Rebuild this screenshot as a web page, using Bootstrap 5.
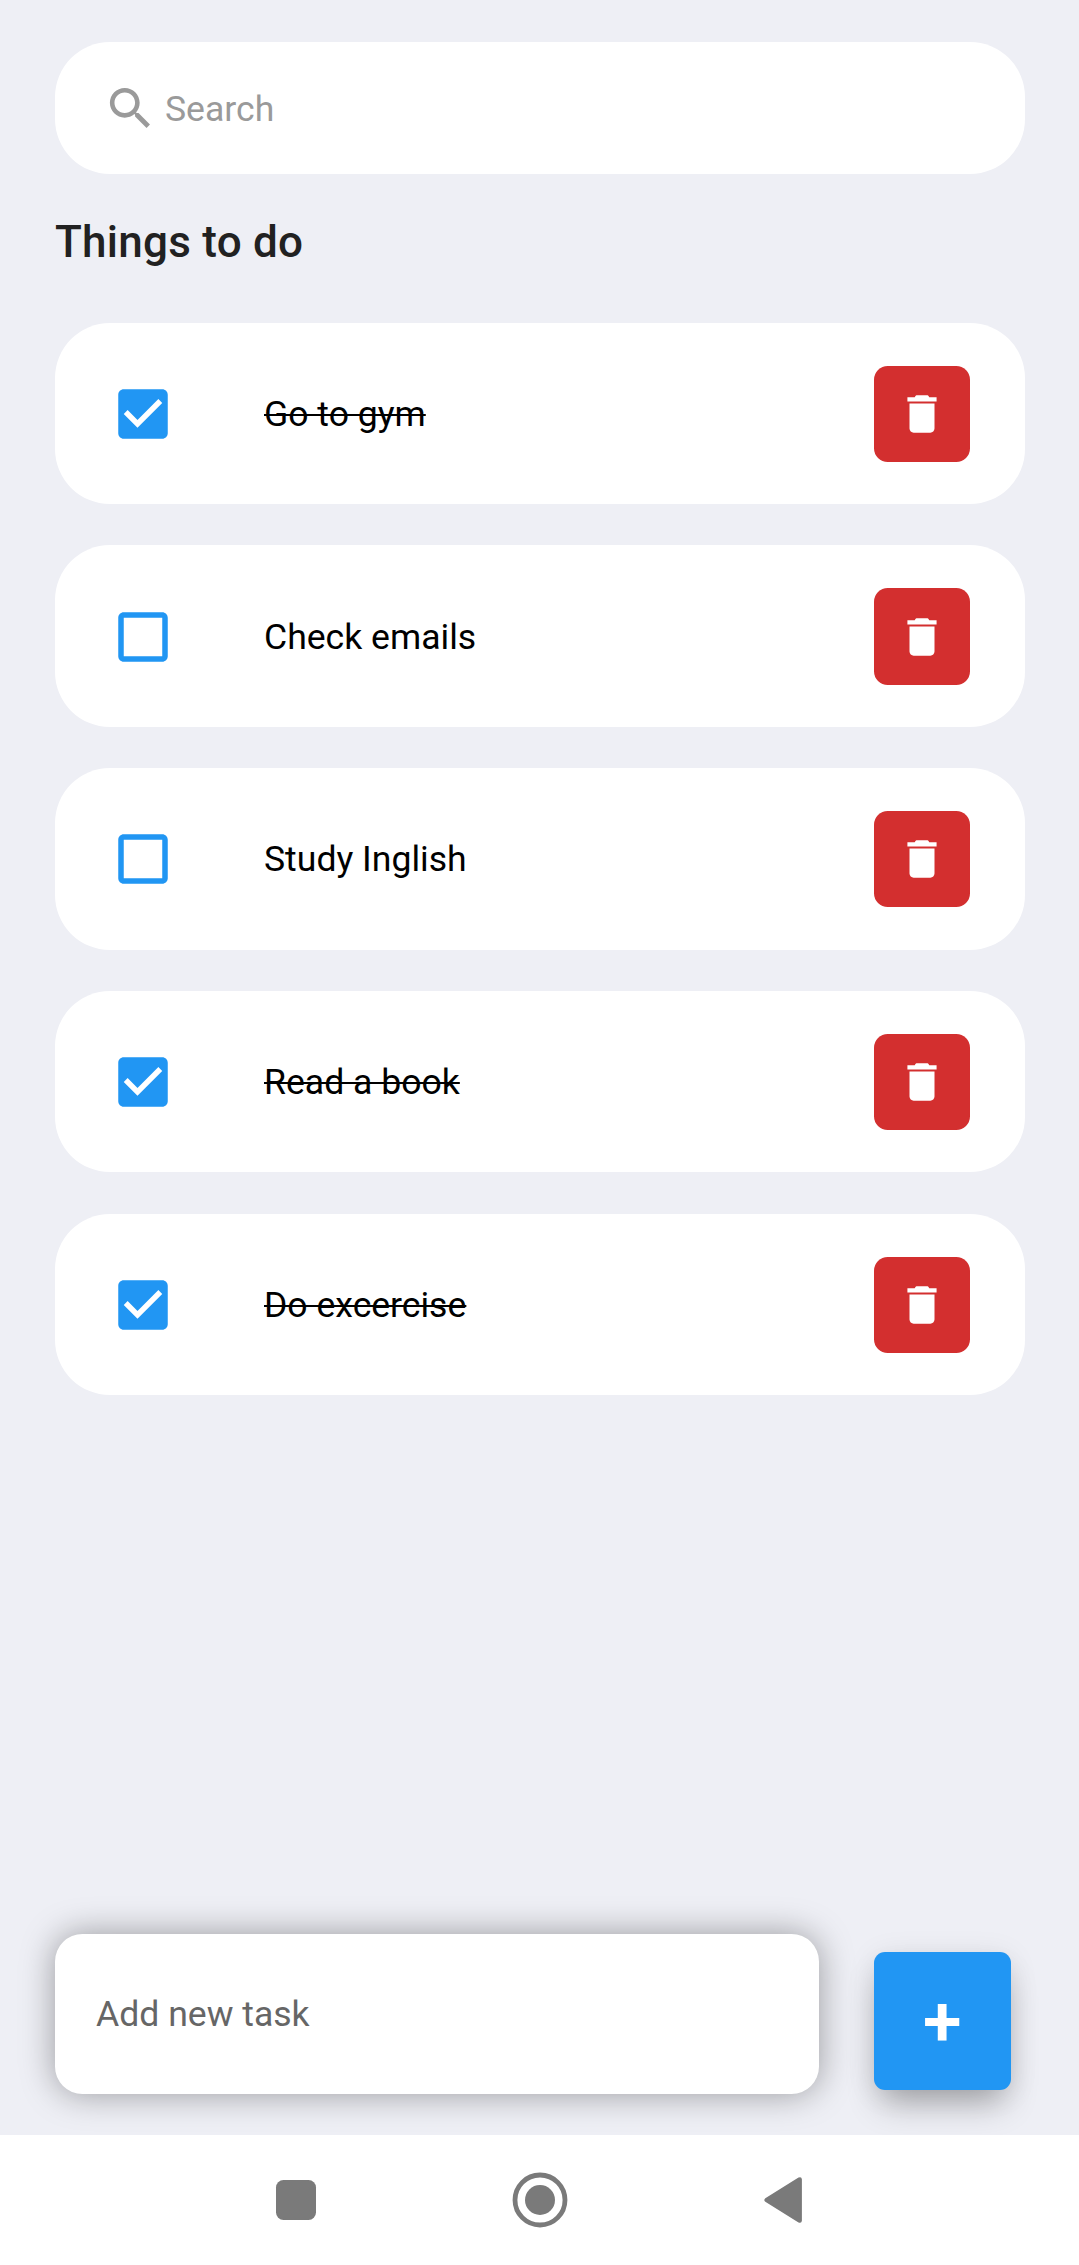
<!DOCTYPE html>
<html lang="en">
<head>
<meta charset="utf-8">
<meta name="viewport" content="width=device-width, initial-scale=1">
<title>Things to do</title>
<link href="https://cdn.jsdelivr.net/npm/bootstrap@5.3.0/dist/css/bootstrap.min.css" rel="stylesheet">
<style>
body{font-family:Roboto,sans-serif;background:#eeeff5;height:2265px;font-size:35.6px;line-height:42px;color:#000;overflow:hidden}
main{padding:42px 54px 0 55px;min-height:0}
.search-bar{height:132px;border-radius:55px;padding-left:48px;color:#9a9a9a;flex:none}
.search-bar svg{width:55px;height:55px;margin-right:7px}
.search-bar span{padding-top:2px}
.heading{font-size:44px;line-height:52px;font-weight:500;letter-spacing:.25px;color:#212121;margin:42px 0 54.6px}
.tasks{gap:41.25px}
.task{height:181.5px;border-radius:55px;padding:1px 55px 0 55px}
.task .tick{width:66px;height:66px;fill:#2196f3;margin-right:88px}
.task.done .label{text-decoration:line-through;text-decoration-thickness:2px}
.delete{width:96.25px;height:96.25px;border-radius:13.75px;background:#d32f2f}
.delete svg{width:50px;height:50px;fill:#fff}
.composer{padding:0 68px 41px 55px;gap:55px;overflow:hidden;height:260px;flex:none}
.new-task{height:160px;border-radius:27.5px;padding-left:41px;color:#666;box-shadow:0 0 34px rgba(0,0,0,.36)}
.add{width:137.5px;height:137.5px;border-radius:11px;background:#2196f3;margin-bottom:4.5px;font-size:70px;font-weight:600;box-shadow:0 20px 34px -8px rgba(0,0,0,.3),0 4px 30px rgba(0,0,0,.09)}
.add span{padding-top:3px}
.sysbar{height:130px;gap:188px;flex:none}
.sysbar svg{width:56px;height:56px;fill:#7a7a7a}
</style>
<script src="https://cdn.jsdelivr.net/npm/bootstrap@5.3.0/dist/js/bootstrap.bundle.min.js"></script>
</head>
<body class="d-flex flex-column">
<svg class="d-none">
  <symbol id="on" viewBox="0 0 24 24"><path d="M19 3H5c-1.11 0-2 .9-2 2v14c0 1.1.89 2 2 2h14c1.11 0 2-.9 2-2V5c0-1.1-.89-2-2-2zm-9 14l-5-5 1.41-1.41L10 14.17l7.59-7.59L19 8l-9 9z"/></symbol>
  <symbol id="off" viewBox="0 0 24 24"><path d="M19 5v14H5V5h14m0-2H5c-1.1 0-2 .9-2 2v14c0 1.1.9 2 2 2h14c1.1 0 2-.9 2-2V5c0-1.1-.9-2-2-2z"/></symbol>
  <symbol id="bin" viewBox="0 0 24 24"><path d="M6 19c0 1.1.9 2 2 2h8c1.1 0 2-.9 2-2V7H6v12zM19 4h-3.500c-.3-.7-.5-1-1.300-1h-4.400c-.8 0-1 .3-1.300 1H5v2h14V4z"/></symbol>
</svg>
<main class="d-flex flex-column flex-grow-1">
  <div class="search-bar bg-white d-flex align-items-center">
    <svg viewBox="0 0 24 24" fill="currentColor"><path d="M15.5 14h-.79l-.28-.27C15.41 12.59 16 11.11 16 9.5 16 5.91 13.09 3 9.5 3S3 5.91 3 9.5 5.910 16 9.5 16c1.610 0 3.090-.59 4.230-1.570l.27.28v.79l5 4.990L20.490 19l-4.990-5zm-6 0C7.010 14 5 11.990 5 9.5S7.010 5 9.5 5 14 7.010 14 9.5 11.990 14 9.5 14z"/></svg>
    <span>Search</span>
  </div>
  <h1 class="heading">Things to do</h1>
  <ul class="tasks list-unstyled d-flex flex-column mb-0">
    <li class="task done bg-white d-flex align-items-center"><svg class="tick"><use href="#on"/></svg><span class="label">Go to gym</span><button class="delete btn border-0 p-0 ms-auto d-flex align-items-center justify-content-center" aria-label="Delete"><svg><use href="#bin"/></svg></button></li>
    <li class="task bg-white d-flex align-items-center"><svg class="tick"><use href="#off"/></svg><span class="label">Check emails</span><button class="delete btn border-0 p-0 ms-auto d-flex align-items-center justify-content-center" aria-label="Delete"><svg><use href="#bin"/></svg></button></li>
    <li class="task bg-white d-flex align-items-center"><svg class="tick"><use href="#off"/></svg><span class="label">Study Inglish</span><button class="delete btn border-0 p-0 ms-auto d-flex align-items-center justify-content-center" aria-label="Delete"><svg><use href="#bin"/></svg></button></li>
    <li class="task done bg-white d-flex align-items-center"><svg class="tick"><use href="#on"/></svg><span class="label">Read a book</span><button class="delete btn border-0 p-0 ms-auto d-flex align-items-center justify-content-center" aria-label="Delete"><svg><use href="#bin"/></svg></button></li>
    <li class="task done bg-white d-flex align-items-center"><svg class="tick"><use href="#on"/></svg><span class="label">Do excercise</span><button class="delete btn border-0 p-0 ms-auto d-flex align-items-center justify-content-center" aria-label="Delete"><svg><use href="#bin"/></svg></button></li>
  </ul>
</main>
<div class="composer d-flex align-items-end">
  <div class="new-task bg-white flex-grow-1 d-flex align-items-center"><span>Add new task</span></div>
  <button class="add btn border-0 p-0 text-white d-flex align-items-center justify-content-center"><span>+</span></button>
</div>
<nav class="sysbar bg-white d-flex align-items-center justify-content-center">
  <svg viewBox="0 0 56 56"><rect x="8" y="8" width="40" height="40" rx="7.500"/></svg>
  <svg viewBox="0 0 56 56"><circle cx="28" cy="28" r="25" fill="none" stroke="#7a7a7a" stroke-width="4.8"/><circle cx="28" cy="28" r="15"/></svg>
  <svg viewBox="0 0 56 56"><path d="M9.300 26.200 42.500 5.600q3-1.300 3.400 1.600v41.600q-.4 2.900-3.400 1.600L9.300 29.800q-2-1.800 0-3.600z"/></svg>
</nav>
</body>
</html>
